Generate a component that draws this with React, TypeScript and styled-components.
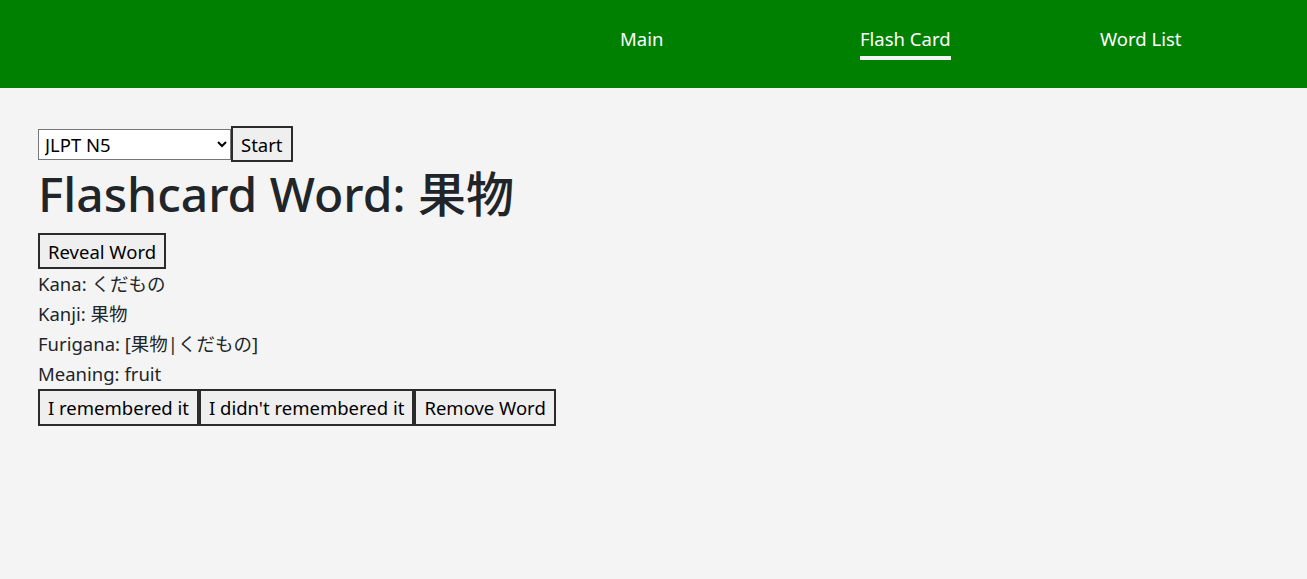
import React from "react";
import styled, { createGlobalStyle } from "styled-components";

const FONT = `"Noto Sans", "Noto Sans CJK JP", sans-serif`;

const Global = createGlobalStyle`
  html, body { margin: 0; padding: 0; }
  body {
    background: #f4f4f4;
    font-family: ${FONT};
    color: #212529;
    font-size: 18.5px;
  }
`;

const Header = styled.header`
  height: 88px;
  background: #008000;
  display: flex;
  align-items: flex-start;
  overflow: hidden;
`;

const NavList = styled.ul`
  list-style: none;
  margin: 0 0 0 620px;
  padding: 0;
  display: flex;
`;

const NavItem = styled.li`
  width: 240px;
  flex: none;
  padding-top: 26px;
`;

const NavLink = styled.a<{ $active?: boolean }>`
  display: inline-block;
  color: #fff;
  font-size: 18.5px;
  line-height: 24px;
  text-decoration: none;
  padding-bottom: 5px;
  border-bottom: 4px solid ${(p) => (p.$active ? "#f4f4f4" : "transparent")};
`;

const Main = styled.main`
  padding: 38px 38px;
`;

const Row = styled.div`
  display: flex;
  align-items: center;
`;

const Select = styled.select`
  width: 193px;
  height: 31px;
  font-family: ${FONT};
  font-size: 18.5px;
  color: #000;
  background: #fff;
  border: 1px solid #767676;
  border-radius: 0;
  padding: 0 2px;
`;

const Button = styled.button<{ $h?: number }>`
  font-family: ${FONT};
  font-size: 18.5px;
  color: #000;
  background: #efefef;
  border: 2px solid #2b2b2b;
  border-radius: 0;
  height: ${(p) => p.$h ?? 36}px;
  padding: 0 8px;
  margin: 0;
`;

const Title = styled.h1`
  font-size: 48px;
  font-weight: 500;
  line-height: 60px;
  margin: 2px 0 9px;
  color: #212529;
`;

const Line = styled.div`
  font-size: 18.5px;
  line-height: 30px;
`;

export default function App() {
  return (
    <>
      <Global />
      <Header>
        <NavList>
          <NavItem><NavLink href="#">Main</NavLink></NavItem>
          <NavItem><NavLink href="#" $active>Flash Card</NavLink></NavItem>
          <NavItem><NavLink href="#">Word List</NavLink></NavItem>
        </NavList>
      </Header>
      <Main>
        <Row>
          <Select defaultValue="N5">
            <option value="N5">JLPT N5</option>
            <option value="N4">JLPT N4</option>
          </Select>
          <Button>Start</Button>
        </Row>
        <Title>Flashcard Word: 果物</Title>
        <Row>
          <Button $h={36}>Reveal Word</Button>
        </Row>
        <Line>Kana: くだもの</Line>
        <Line>Kanji: 果物</Line>
        <Line>Furigana: [果物|くだもの]</Line>
        <Line>Meaning: fruit</Line>
        <Row>
          <Button $h={37}>I remembered it</Button>
          <Button $h={37}>I didn't remembered it</Button>
          <Button $h={37}>Remove Word</Button>
        </Row>
      </Main>
    </>
  );
}
